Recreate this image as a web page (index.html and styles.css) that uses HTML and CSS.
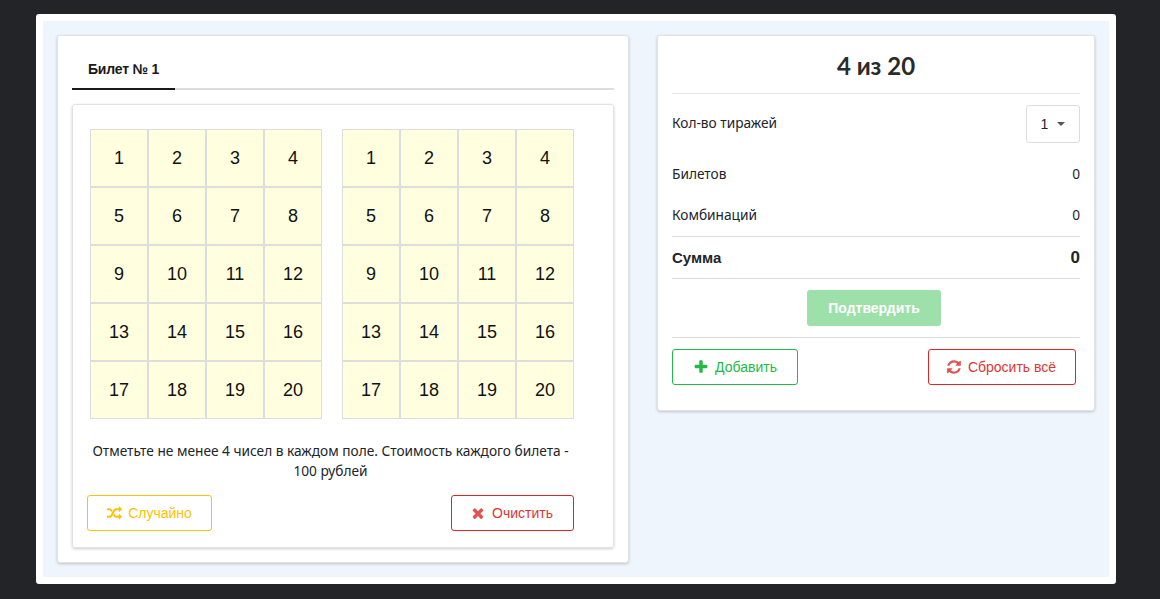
FILE: index.html
```html
<!DOCTYPE html>
<html lang="ru">
<head>
  <meta charset="UTF-8" />
  <title>4 из 20</title>
  <link rel="stylesheet" href="styles.css">
</head>
<body>
  <div class="modal">
    <div class="content">
      <div class="card card-left">
        <div class="tabs">
          <div class="tab">Билет № 1</div>
        </div>
        <div class="ticket">
          <div class="fields">
            <div class="field">
              <div class="cell">1</div><div class="cell">2</div><div class="cell">3</div><div class="cell">4</div>
              <div class="cell">5</div><div class="cell">6</div><div class="cell">7</div><div class="cell">8</div>
              <div class="cell">9</div><div class="cell">10</div><div class="cell">11</div><div class="cell">12</div>
              <div class="cell">13</div><div class="cell">14</div><div class="cell">15</div><div class="cell">16</div>
              <div class="cell">17</div><div class="cell">18</div><div class="cell">19</div><div class="cell">20</div>
            </div>
            <div class="field">
              <div class="cell">1</div><div class="cell">2</div><div class="cell">3</div><div class="cell">4</div>
              <div class="cell">5</div><div class="cell">6</div><div class="cell">7</div><div class="cell">8</div>
              <div class="cell">9</div><div class="cell">10</div><div class="cell">11</div><div class="cell">12</div>
              <div class="cell">13</div><div class="cell">14</div><div class="cell">15</div><div class="cell">16</div>
              <div class="cell">17</div><div class="cell">18</div><div class="cell">19</div><div class="cell">20</div>
            </div>
          </div>
          <p class="hint">Отметьте не менее 4 чисел в каждом поле. Стоимость каждого билета - 100 рублей</p>
          <div class="actions">
            <button class="btn btn-yellow btn-random">
              <svg class="icon icon-random" viewBox="0 0 1792 1792"><path d="M666 481q-60 92-137 273-22-45-37-72.5t-40.5-63.5-51-56.5-63-35-81.5-14.5h-224q-14 0-23-9t-9-23v-192q0-14 9-23t23-9h224q250 0 410 225zm1126 799q0 14-9 23l-320 320q-9 9-23 9-13 0-22.5-9.5t-9.5-22.5v-192q-32 0-85 .5t-81 1-73-1-71-5-64-10.5-63-18.5-58-28.5-59-40-55-53.5-56-69.5q59-93 136-273 22 45 37 72.5t40.5 63.5 51 56.5 63 35 81.5 14.5h256v-192q0-14 9-23t23-9q12 0 24 10l319 319q9 9 9 23zm0-896q0 14-9 23l-320 320q-9 9-23 9-13 0-22.5-9.5t-9.5-22.5v-192h-256q-48 0-87 15t-69 45-51 61.5-45 77.5q-32 62-78 171-29 66-49.5 111t-54 105-64 100-74 83-90 68.5-106.5 42-128 16.5h-224q-14 0-23-9t-9-23v-192q0-14 9-23t23-9h224q48 0 87-15t69-45 51-61.5 45-77.5q32-62 78-171 29-66 49.5-111t54-105 64-100 74-83 90-68.5 106.5-42 128-16.5h256v-192q0-14 9-23t23-9q12 0 24 10l319 319q9 9 9 23z"/></svg>
              Случайно
            </button>
            <button class="btn btn-red btn-clear">
              <svg class="icon" viewBox="0 0 1792 1792"><path d="M1490 1322q0 40-28 68l-136 136q-28 28-68 28t-68-28l-294-294-294 294q-28 28-68 28t-68-28l-136-136q-28-28-28-68t28-68l294-294-294-294q-28-28-28-68t28-68l136-136q28-28 68-28t68 28l294 294 294-294q28-28 68-28t68 28l136 136q28 28 28 68t-28 68l-294 294 294 294q28 28 28 68z"/></svg>
              Очистить
            </button>
          </div>
        </div>
      </div>

      <div class="card card-right">
        <h2 class="title">4 из 20</h2>
        <div class="row row-select">
          <span>Кол-во тиражей</span>
          <div class="select">1<span class="caret"></span></div>
        </div>
        <div class="row"><span>Билетов</span><span>0</span></div>
        <div class="row"><span>Комбинаций</span><span>0</span></div>
        <div class="row row-total"><span>Сумма</span><span class="total-value">0</span></div>
        <div class="confirm">
          <button class="btn-confirm">Подтвердить</button>
        </div>
        <div class="actions actions-right">
          <button class="btn btn-green btn-add">
            <svg class="icon" viewBox="0 0 1792 1792"><path d="M1600 736v192q0 40-28 68t-68 28h-416v416q0 40-28 68t-68 28h-192q-40 0-68-28t-28-68v-416h-416q-40 0-68-28t-28-68v-192q0-40 28-68t68-28h416v-416q0-40 28-68t68-28h192q40 0 68 28t28 68v416h416q40 0 68 28t28 68z"/></svg>
            Добавить
          </button>
          <button class="btn btn-red btn-reset">
            <svg class="icon" viewBox="0 0 1792 1792"><path d="M1639 1056q0 5-1 7-64 268-268 434.5t-478 166.5q-146 0-282.5-55t-243.5-157l-129 129q-19 19-45 19t-45-19-19-45v-448q0-26 19-45t45-19h448q26 0 45 19t19 45-19 45l-137 137q71 66 161 102t187 36q134 0 250-65t186-179q11-17 53-117 8-23 30-23h192q13 0 22.5 9.5t9.5 22.5zm25-800v448q0 26-19 45t-45 19h-448q-26 0-45-19t-19-45 19-45l138-138q-148-137-349-137-134 0-250 65t-186 179q-11 17-53 117-8 23-30 23h-199q-13 0-22.5-9.5t-9.5-22.5v-7q65-268 270-434.5t480-166.5q146 0 284 55.5t245 156.5l130-129q19-19 45-19t45 19 19 45z"/></svg>
            Сбросить всё
          </button>
        </div>
      </div>
    </div>
  </div>
</body>
</html>
```
FILE: styles.css
```css
* {
  box-sizing: border-box;
}
html, body {
  height: 100%;
}
body {
  margin: 0;
  padding: 14px 44px 15px 36px;
  background: #232427;
  color: #212529;
  font-family: "Noto Sans", sans-serif;
  font-size: 13.7px;
  overflow: hidden;
}
.modal {
  height: 570px;
  padding: 7px;
  background: #fff;
  border-radius: 3px;
}
.content {
  display: flex;
  align-items: flex-start;
  gap: 28px;
  height: 556px;
  padding: 14px;
  background: #eef5fd;
}
.card {
  padding: 0 14px;
  background: #fff;
  border: 1px solid #e2e2e2;
  border-radius: 3px;
  box-shadow: 0 1px 3px rgba(0, 0, 0, 0.2);
}
.card-left {
  width: 572px;
  height: 528px;
  padding-top: 14px;
}
.card-right {
  width: 438px;
  height: 376px;
}

/* tabs */
.tabs {
  height: 40px;
  border-bottom: 2px solid #ddd;
}
.tab {
  width: 103px;
  height: 40px;
  padding: 10px 0 0 16px;
  border-bottom: 2px solid #1a1a1a;
  color: #1a1a1a;
  font-family: "Liberation Sans", sans-serif;
  font-weight: 700;
  font-size: 14px;
  letter-spacing: -0.2px;
  line-height: 18px;
}

/* ticket */
.ticket {
  height: 444px;
  margin-top: 14px;
  padding: 24px 39px 0 14px;
  border: 1px solid #e2e2e2;
  border-radius: 3px;
  box-shadow: 0 1px 3px rgba(0, 0, 0, 0.2);
}
.fields {
  display: flex;
  gap: 20px;
  padding-left: 3px;
}
.field {
  display: grid;
  grid-template-columns: repeat(4, 58px);
  grid-auto-rows: 58px;
}
.cell {
  display: flex;
  align-items: center;
  justify-content: center;
  background: #ffffe0;
  border: 1px solid #ddd;
  color: #111;
  font-family: "Liberation Sans", sans-serif;
  font-size: 18px;
}
.hint {
  margin: 22px 0 14px;
  color: #212529;
  line-height: 20px;
  text-align: center;
}
.actions {
  display: flex;
  justify-content: space-between;
}

/* buttons */
.btn {
  display: flex;
  align-items: center;
  justify-content: center;
  gap: 6px;
  height: 36px;
  padding: 0;
  background: #fff;
  border: 1px solid;
  border-radius: 3px;
  font-family: "Liberation Sans", sans-serif;
  font-size: 14px;
}
.icon {
  width: 16px;
  height: 16px;
  fill: currentColor;
}
.icon-random {
  width: 15px;
  height: 15px;
}
.btn-yellow {
  border-color: #ffc107;
  color: #ffc107;
}
.btn-red {
  border-color: #dc2626;
  color: #dc3535;
}
.btn-red .icon {
  opacity: 0.85;
}
.btn-green {
  border-color: #25b845;
  color: #25b845;
}
.btn-random {
  width: 125px;
}
.btn-clear {
  width: 123px;
  padding-right: 2px;
}
.btn-add {
  width: 126px;
}
.btn-reset {
  width: 148px;
  margin-right: 4px;
  padding-right: 2px;
}

/* summary */
.title {
  height: 58px;
  margin: 0;
  border-bottom: 1px solid #e6e6e6;
  color: #2b2b2b;
  font-family: "Lato", sans-serif;
  font-size: 24px;
  font-weight: 700;
  line-height: 60px;
  text-align: center;
}
.row {
  display: flex;
  align-items: center;
  justify-content: space-between;
  height: 41px;
  padding-bottom: 2px;
}
.row-select {
  height: 60px;
  padding-bottom: 0;
}
.row-select > span:first-child {
  margin-bottom: 4px;
}
.select {
  display: flex;
  align-items: center;
  justify-content: center;
  gap: 9px;
  width: 54px;
  height: 38px;
  border: 1px solid #ddd;
  border-radius: 3px;
  font-family: "Liberation Sans", sans-serif;
  font-size: 14px;
}
.caret {
  border-top: 4px solid #555;
  border-left: 4px solid transparent;
  border-right: 4px solid transparent;
}
.row-total {
  height: 43px;
  padding-bottom: 0;
  border-top: 1px solid #ddd;
  border-bottom: 1px solid #ddd;
  color: #212529;
  font-family: "Liberation Sans", sans-serif;
  font-size: 15px;
  font-weight: 700;
}
.total-value {
  font-size: 17px;
}
.confirm {
  display: flex;
  justify-content: center;
  padding: 11px 4px 11px 0;
  border-bottom: 1px solid #ddd;
}
.btn-confirm {
  width: 134px;
  height: 36px;
  background: #9de0a9;
  border: 0;
  border-radius: 3px;
  color: #fff;
  font-family: "Liberation Sans", sans-serif;
  font-size: 14px;
  font-weight: 700;
}
.actions-right {
  padding-top: 11px;
}
```
